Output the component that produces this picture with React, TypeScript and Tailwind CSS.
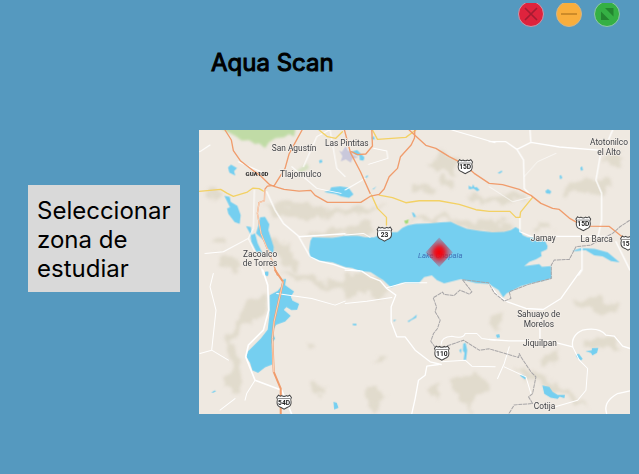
import type { ReactNode } from 'react';

type Label = { text: string; x: number; y: number };

const labels: Label[] = [
  { text: 'San Agustín', x: 285, y: 63 },
  { text: 'Las Pintitas', x: 443, y: 49 },
  { text: 'Tlajomulco', x: 305, y: 140 },
  { text: 'Zacoalco', x: 183, y: 381 },
  { text: 'de Torres', x: 183, y: 409 },
  { text: 'Atotonilco', x: 1229, y: 46 },
  { text: 'el Alto', x: 1229, y: 74 },
  { text: 'Jamay', x: 1032, y: 332 },
  { text: 'La Barca', x: 1192, y: 337 },
  { text: 'Sahuayo de', x: 1018, y: 561 },
  { text: 'Morelos', x: 1019, y: 591 },
  { text: 'Jiquilpan', x: 1022, y: 647 },
  { text: 'Cotija', x: 1036, y: 837 },
];

const shields: Label[] = [
  { text: '15D', x: 798, y: 109 },
  { text: '23', x: 556, y: 311 },
  { text: '15D', x: 1152, y: 280 },
  { text: '15D', x: 1286, y: 338 },
  { text: '110', x: 728, y: 668 },
  { text: '54D', x: 255, y: 815 },
];

function Shield({ text, x, y }: Label) {
  return (
    <g transform={`translate(${x} ${y})`}>
      <path
        d="M-17 -20 Q-12 -15 -7 -19 Q0 -14 7 -19 Q12 -15 17 -20 L22 -13 Q18 -8 21 0 Q22 13 9 17 L0 22 L-9 17 Q-22 13 -21 0 Q-18 -8 -22 -13Z"
        fill="#fff"
        stroke="#444"
        strokeWidth="3"
      />
      <path d="M-18 -10H18" stroke="#555" strokeWidth="2" />
      <text y="9" textAnchor="middle" fontSize="20" fontWeight="700" fill="#222">
        {text}
      </text>
    </g>
  );
}

function Sector({ x, y, children }: { x: number; y: number; children: ReactNode }) {
  return <g transform={`translate(${x} ${y})`}>{children}</g>;
}

function Relief() {
  return (
    <>
      <g filter="url(#terrain)" fill="#d3cdb8" opacity="0.5">
        <Sector x={-12} y={-15}>
          <path d="M205 225 L250 240 L290 235 L340 240 L410 255 L450 250 V272 L390 268 L330 282 L300 262 L240 268Z" />
          <path d="M20 210 L60 190 L90 205 L60 218Z" />
          <path d="M320 330 L380 318 L450 322 V335 L350 338Z" />
          <path d="M225 330 L260 350 L300 400 L320 440 L275 430 L235 380Z" />
          <path d="M50 345 L90 350 L80 370 L45 365Z M90 385 L135 400 L130 440 L85 425Z" />
        </Sector>
        <Sector x={438} y={-15}>
          <path d="M250 105 L290 85 L335 105 L330 140 L275 140Z" />
          <path d="M205 175 L245 180 L260 200 L210 205Z M290 160 L330 165 L325 190 L285 180Z" />
          <path d="M365 208 L450 218 L520 200 L550 215 L450 236 L380 225Z" />
          <path d="M0 260 L50 240 L110 248 L80 260 L0 275Z M0 315 L55 290 L95 315 L60 330 L0 330Z" />
          <path d="M185 285 L240 270 L310 280 L390 285 L450 300 V324 L370 312 L310 290Z" />
        </Sector>
        <Sector x={870} y={-15}>
          <path d="M235 175 L280 155 L330 165 L365 180 L350 200 L300 210 L230 205Z" />
          <path d="M345 100 L390 80 L400 110 L370 120Z M145 290 L180 295 L180 320 L150 315Z" />
          <path d="M0 280 L55 295 L80 305 L40 320 L0 318Z" />
        </Sector>
        <Sector x={-12} y={420}>
          <path d="M160 80 L215 65 L215 110 L180 150 L140 175 L115 215 L135 290 L150 350 L120 365 L85 345 L110 290 L95 225 L130 155Z" />
          <path d="M250 5 L330 10 L390 30 L450 45 V65 L370 45 L310 30Z" />
          <path d="M350 340 L390 350 L375 380 L340 375Z M340 215 L370 235 L350 250Z" />
        </Sector>
        <Sector x={438} y={420}>
          <path d="M0 15 L60 5 L130 60 L100 75 L50 60 L0 85Z" />
          <path d="M320 330 L390 310 L430 350 L390 370 L380 420 L350 380 L320 360Z" />
          <path d="M60 370 L100 340 L120 380 L85 430Z M80 275 L130 255 L120 285Z M235 355 L285 335 L280 390 L250 370Z" />
        </Sector>
        <Sector x={870} y={420}>
          <path d="M255 90 L320 85 L380 105 L370 130 L320 130 L300 112 L250 115Z" />
          <path d="M70 290 L120 300 L190 340 L250 370 L310 410 L280 405 L200 365 L110 320Z" />
          <path d="M280 215 L330 190 L390 210 L400 235 L350 230 L300 245Z M155 250 L205 240 L200 285 L160 290Z M0 140 L40 120 L35 175 L0 165Z" />
        </Sector>
      </g>
      <g filter="url(#haze)" fill="#c0dba6">
        <path d="M60 -8 H290 L285 20 L270 12 L255 22 L230 24 L210 36 L198 54 L180 40 L168 42 L150 30 L128 32 L110 18 L90 8Z" />
        <path d="M290 125 L325 100 L330 115 L305 130Z" opacity="0.5" />
      </g>
      <path d="M420 62 L428 66 L440 48 L446 62 L462 66 L460 74 L478 82 L460 86 L455 98 L440 88 L425 94 L430 78Z" fill="#c9c8db" />
      <path d="M615 272 l14 -4 -3 12 -7 1z" fill="#a5da7a" />
    </>
  );
}

function Water() {
  return (
    <g fill="#75cff0">
      <path d="M330 360 L334 332 L340 322 L400 323 L438 317 L477 317 L500 322 L525 322 L560 307 L595 306 L610 293 L626 286 L650 281 L694 280 L725 277 L755 275 L775 285 L803 296 L840 302 L880 307 L915 305 L935 300 L949 291 L963 299 L970 315 L985 322 L1010 324 L1036 330 L1045 348 L1043 358 L1025 366 L1027 378 L1010 388 L990 395 L975 408 L998 405 L1020 402 L1028 410 L1055 408 L1057 445 L1030 452 L995 460 L965 468 L935 484 L922 490 L912 502 L898 480 L868 461 L830 459 L785 447 L735 460 L713 450 L698 436 L675 441 L660 458 L608 458 L575 472 L552 450 L514 426 L477 422 L460 414 L438 411 L400 397 L360 392 L332 380Z" />
      <Sector x={-12} y={-15}>
        <path d="M88 212 L104 215 L107 230 L127 242 L137 270 L134 296 L119 291 L100 266 L96 250 L105 247Z" />
        <path d="M99 127 L108 119 L126 129 L117 138 L121 152 L103 143Z M372 106 l8 -2 2 8 -9 2z" />
        <path d="M387 201 L405 195 L408 187 L435 184 L460 188 L475 208 L462 218 L438 214 L422 207Z" />
        <path d="M153 303 L168 306 L169 330 L180 325 L188 355 L205 390 L184 380 L169 350 L166 327Z" />
        <path d="M195 277 L210 275 L223 298 L220 315 L236 365 L235 387 L216 368 L205 345 L183 325 L191 298Z M210 442 l8 -3 2 10 -7 4z" />
      </Sector>
      <Sector x={438} y={-15}>
        <path d="M20 80 L36 75 L58 97 L55 107 L44 105 L43 92 L30 89Z M63 153 l6 -3 -2 7 -7 2z M79 37 l8 -3 2 10 -8 -1z" />
        <path d="M80 194 L94 184 L87 192Z M200 262 L207 264 L213 275 L205 276Z" />
        <path d="M370 182 L380 187 L384 178 L388 187 L395 186 L403 195 L396 198 L385 191 L371 193Z" />
      </Sector>
      <Sector x={870} y={-15}>
        <path d="M25 144 l12 -7 3 3 -9 6z M211 152 l5 -2 3 10 -7 2z M273 128 l6 -4 2 12 -6 1z M168 198 l8 -6 10 7 -3 7 -12 -1z" />
        <path d="M248 377 L275 369 L316 371 L355 382 L391 412 L365 408 L340 394 L315 391 L289 375 L260 378Z" />
      </Sector>
      <Sector x={-12} y={420}>
        <path d="M224 75 L248 62 L259 48 L263 28 L273 26 L270 45 L297 64 L287 79 L292 91 L312 101 L306 119 L289 120 L274 111 L266 119 L287 137 L270 154 L243 164 L232 185 L240 205 L230 220 L231 283 L210 291 L189 308 L172 300 L165 278 L154 260 L158 244 L197 205 L218 178 L223 135Z" />
        <path d="M210 5 l10 1 -2 12 -8 -3z M48 367 l10 -6 6 1 -8 5z M415 395 L425 398 L430 413 L417 418Z" />
      </Sector>
      <Sector x={438} y={420}>
        <path d="M22 161 h12 v5 h-10z M144 150 l9 -2 -6 7z M187 153 L202 144 L215 133 L213 143 L198 150 L190 156Z" />
        <path d="M354 221 L361 218 L366 240 L362 270 L355 271 L358 248 L353 242Z M342 240 l7 -5 -2 15z" />
      </Sector>
      <Sector x={870} y={420}>
        <path d="M20 194 l10 -2 2 10 -9 1z M91 316 l10 -2 10 8 -4 6z M159 346 L180 350 L190 365 L205 374 L227 374 L225 384 L211 379 L205 386 L184 382 L165 371Z" />
        <path d="M260 252 l9 -1 11 15 -5 5 -13 -10z M288 243 L307 241 L308 234 L327 233 L323 248 L309 256 L305 248Z" />
      </Sector>
    </g>
  );
}

function Roads() {
  return (
    <g fill="none" strokeLinejoin="round" strokeLinecap="round">
      <g stroke="#fff" strokeWidth="4">
        <Sector x={-12} y={-15}>
          <path d="M130 110 L220 150 M325 125 L365 35 M365 35 L402 15 M405 15 L425 130 L450 155 M290 125 L365 190 L438 205" strokeWidth="3" />
          <path d="M215 200 L240 255 L265 295 L310 333 L345 395 L372 408 L415 418 L450 430 M310 335 L450 326" />
          <path d="M178 195 L175 310 L160 340 L190 400 L205 450 M160 340 L85 380 L30 385 M45 60 L15 80" strokeWidth="3" />
        </Sector>
        <Sector x={438} y={-15}>
          <path d="M318 14 L450 53 M0 195 L60 160 M85 70 L125 78 L128 100 L70 118 M0 330 L55 325 L75 337 M0 430 L45 437" strokeWidth="3" />
        </Sector>
        <Sector x={870} y={-15}>
          <path d="M0 50 H50 L83 73 L125 52 L210 66 L335 76 M83 73 L103 105 L105 190 L125 212 M125 52 L122 15 M335 80 L320 165 L337 205 V285 L325 340 M355 50 L370 15 M92 280 V320 L125 334 H360 M278 370 V435 L268 450 M380 350 L422 435" />
          <path d="M0 185 L70 230 L130 215 M105 155 L145 110 L200 85" strokeWidth="2" />
        </Sector>
        <Sector x={-12} y={420}>
          <path d="M203 0 L218 45 L221 120 L205 180 L160 225 L152 260 L180 330 L260 360 L290 432" strokeWidth="5" />
          <path d="M55 10 L45 50 L63 120 L50 240 L100 270 M50 240 L15 250 M245 70 L350 85 L420 105 L450 93 M180 330 L155 370 L150 390 M75 420 L120 385" strokeWidth="3" />
        </Sector>
        <Sector x={438} y={420}>
          <path d="M0 0 L50 3 L75 20 L105 32 L125 55 L152 75 L138 110 L138 155 L155 200 L180 200 L210 240 L255 275 L288 283 M280 283 L245 288 L240 315 L220 330 L210 385 L200 430" />
          <path d="M125 53 L180 38 L245 38 M0 100 L65 93 L140 82 M288 222 Q288 200 320 198 Q355 207 360 190 L395 190 L410 205 L450 210 M288 275 L360 270 L380 288 L450 290" strokeWidth="3" />
        </Sector>
        <Sector x={870} y={420}>
          <path d="M0 42 L25 75 L55 95 L110 115 L162 118 L215 85 L275 0 M152 150 V205 M0 208 L60 212 H180 L250 230 Q245 195 280 180 Q330 170 350 195 L375 198 L400 228 L422 235 M422 362 L385 370 Q340 395 352 430" />
          <path d="M250 230 L270 270 L295 295 L290 360 L265 390 L180 415 M25 325 L45 280 L60 230 M45 290 L110 320 M110 320 L125 370" strokeWidth="3" />
        </Sector>
      </g>
      <g stroke="#f3d164" strokeWidth="4">
        <path d="M0 184 L65 178 L85 190 L103 199 L145 186 L162 174 L180 176 L195 184" />
        <path d="M360 0 L385 20 L410 25 L430 5 M520 0 L535 28 L620 22 L650 0" />
        <path d="M540 195 L580 203 L620 218 L660 212 L720 212 L780 223 L830 239 L870 244 H932 L950 262 H962 L964 246 L1000 202" />
        <path d="M517 195 L535 235 L562 262 L562 285" />
      </g>
      <g stroke="#f09c6c" strokeWidth="4">
        <path d="M78 0 L97 30 L103 62 L125 93 L155 116 L185 138 L212 164 L225 169 L255 178 L300 183 L335 181 L348 196 L385 217 L485 217 L515 198 L540 193 L555 177 L570 140 L595 115 L604 80 L636 45 L646 24 L647 0" />
        <path d="M309 0 L287 40 L270 72 L258 115 L226 166 L205 168 L197 178 L196 212 L180 218 L175 250 L186 310 L219 391 L235 435" />
        <path d="M436 0 L454 68 L484 125 L513 190 M457 65 L475 74 L500 72 L520 48 L518 0" />
        <path d="M630 0 L680 46 L710 55 L750 80 L790 100 L825 130 L870 160 L910 164 L960 178 L995 196 L1025 220 L1060 235 L1080 238 L1110 264 L1152 288 L1230 289 L1262 315 L1292 338" />
        <path d="M228 420 L252 455 L225 575 L220 625 L224 725 L245 775 L245 852" strokeWidth="6" />
      </g>
      <path d="M195 178 L196 212 L180 218 L175 250 L186 310 L219 391 M252 455 L225 575 L220 625 L224 725" stroke="#fff0e3" strokeWidth="2" />
      <g stroke="#a7a5a7" strokeWidth="3" strokeDasharray="12 2" strokeLinecap="butt">
        <path d="M790 449 L818 485 L810 492 L782 480 L765 496 L735 493 L730 486 L702 503 L712 530 L708 545 L723 570 L715 595 L703 610 L695 633 L710 655 M745 647 L793 630 L840 660 L870 656 L935 675 L958 682 L960 670 L965 680 L995 725 L1010 740 L1000 790 L988 800 L1000 820 L945 824 L928 852" />
        <path d="M790 449 L868 458 L885 488 L915 513 L935 505 L930 485 L990 462 L1056 445 L1056 405 L1065 390 L1110 388 L1130 350 L1175 345 L1200 330 L1240 310 L1262 290 L1292 270" />
      </g>
    </g>
  );
}

function LakeMap() {
  return (
    <svg
      role="img"
      aria-label="Lake Chapala"
      viewBox="0 0 1292 852"
      className="block h-auto w-full bg-[#efe9e1] font-[Roboto,sans-serif]"
    >
      <defs>
        <filter id="terrain">
          <feTurbulence type="fractalNoise" baseFrequency="0.025" numOctaves="3" seed="4" result="noise" />
          <feDisplacementMap in="SourceGraphic" in2="noise" scale="55" xChannelSelector="R" yChannelSelector="G" />
          <feGaussianBlur stdDeviation="5" />
        </filter>
        <filter id="haze"><feGaussianBlur stdDeviation="3" /></filter>
        <filter id="glow" x="-40%" y="-40%" width="180%" height="180%"><feGaussianBlur stdDeviation="7" /></filter>
        <radialGradient id="hot">
          <stop offset="0" stopColor="#ff0000" />
          <stop offset="0.3" stopColor="#f5000c" stopOpacity="0.85" />
          <stop offset="1" stopColor="#b04060" stopOpacity="0.25" />
        </radialGradient>
      </defs>
      <Relief />
      <Water />
      <Roads />
      <text x="174" y="137" textAnchor="middle" fontSize="18" fontWeight="900" fill="#333">GUA10D</text>
      <g fontSize="25" fill="#3f4145" stroke="#f4efe9" strokeWidth="4" paintOrder="stroke" textAnchor="middle">
        {labels.map((l) => (
          <text key={l.text} x={l.x} y={l.y}>{l.text}</text>
        ))}
      </g>
      {shields.map((s) => (
        <Shield key={s.x} {...s} />
      ))}
      <text x="723" y="385" textAnchor="middle" fontSize="23" fontStyle="italic" fill="#3f72b8">Lake Chapala</text>
      <path d="M720 322 L761 367 L720 411 L679 367Z" fill="url(#hot)" />
      <path d="M720 345 L738 367 L720 388 L702 367Z" fill="#f5000c" opacity="0.5" filter="url(#glow)" />
    </svg>
  );
}

const control = 'size-[26px] shrink-0 rounded-full';

export default function App() {
  return (
    <div className="min-h-screen bg-[#5599bf] pt-[3px] pr-[9px] font-[Inter,sans-serif] text-black">
      <div className="flex h-6 items-end justify-end gap-3 overflow-hidden pr-[10px]">
        <button type="button" aria-label="Cerrar" className={control}>
          <svg viewBox="0 0 26 26">
            <circle cx="13" cy="13" r="12.5" fill="#df233d" stroke="#c59bad" />
            <path d="M7 7L19 19M19 7L7 19" stroke="#a51c32" strokeWidth="1.6" />
          </svg>
        </button>
        <button type="button" aria-label="Minimizar" className={control}>
          <svg viewBox="0 0 26 26">
            <circle cx="13" cy="13" r="12.5" fill="#f9ae3c" stroke="#d0b58a" />
            <path d="M5 13H21" stroke="#c88728" strokeWidth="1.8" />
          </svg>
        </button>
        <button type="button" aria-label="Maximizar" className={control}>
          <svg viewBox="0 0 26 26">
            <circle cx="13" cy="13" r="12.5" fill="#35b044" stroke="#91c6ac" />
            <path d="M11 7H19.500V15.500ZM7 10.500V19H15.500Z" fill="#23852f" />
          </svg>
        </button>
      </div>
      <h1 className="mt-5 ml-[211px] text-2xl leading-8 font-normal [-webkit-text-stroke:1px_black]">Aqua Scan</h1>
      <main className="mt-[51px] flex items-start gap-[19px] pl-7">
        <button type="button" className="mt-[55px] w-[152px] shrink-0 bg-[#d9d9d9] pt-[11px] pb-[9px] pl-[9px] text-left text-2xl leading-[29px]">
          Seleccionar zona de estudiar
        </button>
        <div className="min-w-0 flex-1">
          <LakeMap />
        </div>
      </main>
    </div>
  );
}
